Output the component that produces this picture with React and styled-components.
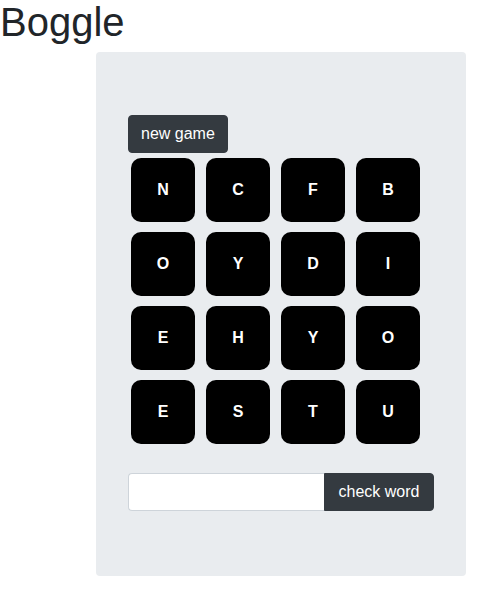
import React, { useState } from "react"
import styled, { createGlobalStyle } from "styled-components"

const GlobalStyle = createGlobalStyle`
  body {
    margin: 0;
    font-family: "Liberation Sans", Arial, sans-serif;
    color: #212529;
    background: #fff;
  }
`

const Title = styled.h1`
  margin: 0 0 8px 0;
  font-size: 40px;
  font-weight: 500;
  line-height: 44px;
`

const Board = styled.div`
  margin-left: 96px;
  width: 370px;
  box-sizing: border-box;
  padding: 63px 32px 65px;
  background: #e9ecef;
  border-radius: 4px;
`

const DarkButton = styled.button`
  font-family: inherit;
  font-size: 16px;
  line-height: 24px;
  padding: ${(p) => (p.$joined ? "6px 13.5px" : "6px 12px")};
  color: #fff;
  background: #343a40;
  border: 1px solid #343a40;
  border-radius: ${(p) => (p.$joined ? "0 4px 4px 0" : "4px")};
  cursor: pointer;
`

const Grid = styled.div`
  display: grid;
  grid-template-columns: repeat(4, 64px);
  column-gap: 11px;
  row-gap: 10px;
  padding: 5px 0 0 3px;
  margin-bottom: 29px;
`

const Tile = styled.div`
  width: 64px;
  height: 64px;
  border-radius: 10px;
  background: #000;
  color: #fff;
  display: flex;
  align-items: center;
  justify-content: center;
  font-size: 16px;
  font-weight: 700;
`

const WordForm = styled.form`
  display: flex;
`

const WordInput = styled.input`
  width: 196px;
  height: 38px;
  box-sizing: border-box;
  padding: 6px 12px;
  font-family: inherit;
  font-size: 16px;
  border: 1px solid #ced4da;
  border-right: none;
  border-radius: 4px 0 0 4px;
  background: #fff;
  outline: none;
`

const letters = "NCFBOYDIEHYOESTU".split("")

const App = () => {
  const [word, setWord] = useState("")
  return (
    <>
      <GlobalStyle />
      <Title>Boggle</Title>
      <Board>
        <DarkButton>new game</DarkButton>
        <Grid>
          {letters.map((l, i) => (
            <Tile key={i}>{l}</Tile>
          ))}
        </Grid>
        <WordForm onSubmit={(e) => e.preventDefault()}>
          <WordInput value={word} onChange={(e) => setWord(e.target.value)} />
          <DarkButton $joined type="submit">
            check word
          </DarkButton>
        </WordForm>
      </Board>
    </>
  )
}

export default App
